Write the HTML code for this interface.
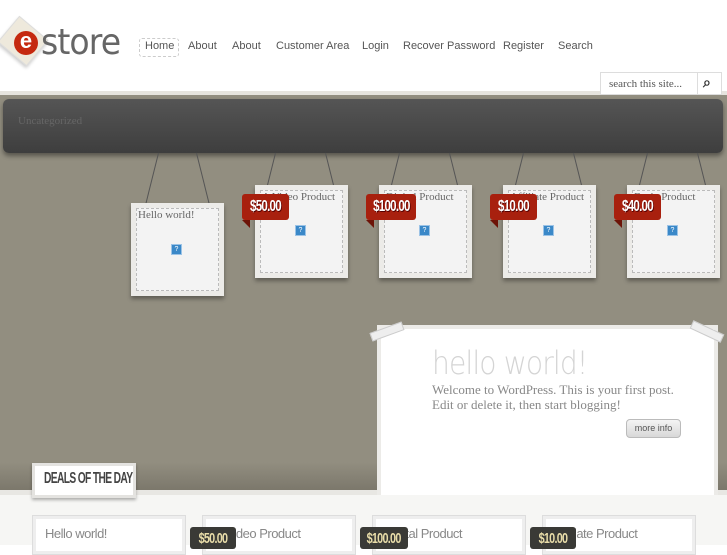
<!DOCTYPE html>
<html><head><style>
*{margin:0;padding:0;box-sizing:border-box}
body{width:727px;height:545px;overflow:hidden;background:#fff;position:relative;font-family:"Liberation Sans","DejaVu Sans",sans-serif}
.a{position:absolute}
.nav{top:40px;font-family:"Liberation Sans",sans-serif;font-size:11px;color:#555}
.card{position:absolute;width:93px;height:93px;background:#ecebe8;box-shadow:0 3px 4px rgba(0,0,0,.35)}
.card .in{position:absolute;left:5px;top:5px;right:5px;bottom:5px;background:#f3f3f3;border:1px dashed #bbb;font-family:"Liberation Serif",serif;font-size:11px;color:#666;padding:0 0 0 1px;white-space:nowrap;overflow:hidden}
.q{position:absolute;width:11px;height:11px;background:#3a88c8;border:1px solid #9cc3e6;color:#fff;font-size:7px;text-align:center;line-height:9px}
.tag{position:absolute;width:47px;height:26px;background:#a8200e;border-radius:3px;color:#fff;font-weight:bold;font-size:16px;text-align:center;line-height:26px;letter-spacing:-1px;text-shadow:1px 1px 0 #500;white-space:nowrap}
.tag span{display:inline-block;transform:scaleX(.72)}
.tag:after{content:"";position:absolute;left:0;top:26px;border-top:8px solid #6d1408;border-left:8px solid transparent}
.str{position:absolute;width:1px;background:#555;transform-origin:top}
.bc{position:absolute;top:515px;width:154px;height:40px;background:#fff;border:1px solid #ddd;box-shadow:0 0 0 3px #eee inset;font-size:13px;color:#888;padding:10px 0 0 12px;letter-spacing:-.5px;white-space:nowrap}
.dt{position:absolute;top:527px;width:46px;height:22px;background:#3a3a36;border-radius:3px;color:#e8dca8;font-weight:bold;font-size:15px;text-align:center;line-height:24px;letter-spacing:-1px;white-space:nowrap}
.dt span{display:inline-block;transform:scaleX(.72)}
</style></head><body>
<div class="a" style="left:4px;top:24px;width:38px;height:34px;background:#eee9dc;border:1px solid #ddd;transform:rotate(40deg);box-shadow:1px 2px 3px rgba(0,0,0,.2)"></div>
<div class="a" style="left:14px;top:31px;width:24px;height:24px;border-radius:50%;background:#c5290f;color:#fff;font-weight:bold;font-size:22px;line-height:20px;text-align:center">e</div>
<div class="a" style="left:41px;top:22px;font-size:36px;color:#666;letter-spacing:-1px;font-family:'DejaVu Sans',sans-serif;transform:scaleX(.92);transform-origin:left">store</div>
<div class="a" style="left:139px;top:38px;width:40px;height:19px;border:1px dashed #ccc;border-radius:3px"></div>
<div class="a nav" style="left:145px">Home</div>
<div class="a nav" style="left:188px">About</div>
<div class="a nav" style="left:232px">About</div>
<div class="a nav" style="left:276px">Customer Area</div>
<div class="a nav" style="left:362px">Login</div>
<div class="a nav" style="left:403px">Recover Password</div>
<div class="a nav" style="left:503px">Register</div>
<div class="a nav" style="left:558px">Search</div>
<div class="a" style="left:0;top:91px;width:727px;height:5px;background:#e6e4de"></div>
<div class="a" style="left:0;top:95px;width:727px;height:400px;background:#928e80"></div>
<div class="a" style="left:0;top:462px;width:727px;height:30px;background:linear-gradient(#928e80,#7a766a)"></div>
<div class="a" style="left:0;top:490px;width:727px;height:5px;background:#e8e7e3"></div>
<div class="a" style="left:600px;top:72px;width:122px;height:23px;background:#fff;border:1px solid #ddd"></div>
<div class="a" style="left:697px;top:73px;width:1px;height:22px;background:#ddd"></div>
<div class="a" style="left:609px;top:78px;font-family:'Liberation Serif',serif;font-size:11px;color:#555">search this site...</div>
<div class="a" style="left:703px;top:74px;font-size:14px;color:#333;font-weight:bold">&#x2315;</div>
<div class="a" style="left:3px;top:99px;width:720px;height:54px;border-radius:6px;background:linear-gradient(#555,#3e3e3e);box-shadow:0 3px 5px rgba(0,0,0,.4)"></div>
<div class="a" style="left:18px;top:115px;font-family:'Liberation Serif',serif;font-size:11px;color:#666">Uncategorized</div>
<div class="str" style="left:158px;top:153px;height:52px;transform:rotate(14deg)"></div>
<div class="str" style="left:196px;top:153px;height:52px;transform:rotate(-14deg)"></div>
<div class="str" style="left:275px;top:153px;height:33px;transform:rotate(14deg)"></div>
<div class="str" style="left:325px;top:153px;height:33px;transform:rotate(-14deg)"></div>
<div class="str" style="left:399px;top:153px;height:33px;transform:rotate(14deg)"></div>
<div class="str" style="left:449px;top:153px;height:33px;transform:rotate(-14deg)"></div>
<div class="str" style="left:523px;top:153px;height:33px;transform:rotate(14deg)"></div>
<div class="str" style="left:573px;top:153px;height:33px;transform:rotate(-14deg)"></div>
<div class="str" style="left:647px;top:153px;height:33px;transform:rotate(14deg)"></div>
<div class="str" style="left:697px;top:153px;height:33px;transform:rotate(-14deg)"></div>
<div class="card" style="left:131px;top:203px"><div class="in">Hello world!</div><div class="q" style="left:40px;top:41px">?</div></div>
<div class="card" style="left:255px;top:185px"><div class="in">A Video Product</div><div class="q" style="left:40px;top:40px">?</div></div>
<div class="card" style="left:379px;top:185px"><div class="in">Digital Product</div><div class="q" style="left:40px;top:40px">?</div></div>
<div class="card" style="left:503px;top:185px"><div class="in">Affiliate Product</div><div class="q" style="left:40px;top:40px">?</div></div>
<div class="card" style="left:627px;top:185px"><div class="in">Basic Product</div><div class="q" style="left:40px;top:40px">?</div></div>
<div class="tag" style="left:242px;top:194px"><span>$50.00</span></div>
<div class="tag" style="left:366px;top:194px;width:50px"><span>$100.00</span></div>
<div class="tag" style="left:490px;top:194px"><span>$10.00</span></div>
<div class="tag" style="left:614px;top:194px"><span>$40.00</span></div>
<div class="a" style="left:377px;top:325px;width:341px;height:170px;background:#fff;border:4px solid #ecebe8;border-bottom:none"></div>
<div class="a" style="left:370px;top:327px;width:34px;height:9px;background:#eee;transform:rotate(-20deg);border:1px solid #ccc"></div>
<div class="a" style="left:690px;top:327px;width:34px;height:9px;background:#eee;transform:rotate(25deg);border:1px solid #ccc"></div>
<div class="a" style="left:432px;top:344px;font-size:32px;color:#d4d4d4;letter-spacing:-1px;font-family:'DejaVu Sans',sans-serif;font-weight:200;transform:scaleX(.88);transform-origin:left">hello world!</div>
<div class="a" style="left:432px;top:382px;font-family:'Liberation Serif',serif;font-size:13px;color:#888;line-height:15px">Welcome to WordPress. This is your first post.<br>Edit or delete it, then start blogging!</div>
<div class="a" style="left:626px;top:419px;width:55px;height:19px;border-radius:4px;background:linear-gradient(#f4f4f4,#d8d8d8);border:1px solid #bbb;font-size:9px;color:#555;text-align:center;line-height:17px">more info</div>
<div class="a" style="left:0;top:495px;width:727px;height:50px;background:#f6f6f4"></div>
<div class="a" style="left:32px;top:463px;width:104px;height:35px;background:#fff;border:3px solid #e4e3e0;box-shadow:0 2px 3px rgba(0,0,0,.3)"></div>
<div class="a" style="left:44px;top:470px;font-weight:bold;font-size:16px;color:#444;letter-spacing:-1px;transform:scaleX(.64);transform-origin:left;white-space:nowrap">DEALS OF THE DAY</div>
<div class="bc" style="left:32px">Hello world!</div>
<div class="bc" style="left:202px">A Video Product</div>
<div class="bc" style="left:372px">Digital Product</div>
<div class="bc" style="left:542px">Affiliate Product</div>
<div class="dt" style="left:190px"><span>$50.00</span></div>
<div class="dt" style="left:360px;width:48px"><span>$100.00</span></div>
<div class="dt" style="left:530px"><span>$10.00</span></div>
</body></html>
